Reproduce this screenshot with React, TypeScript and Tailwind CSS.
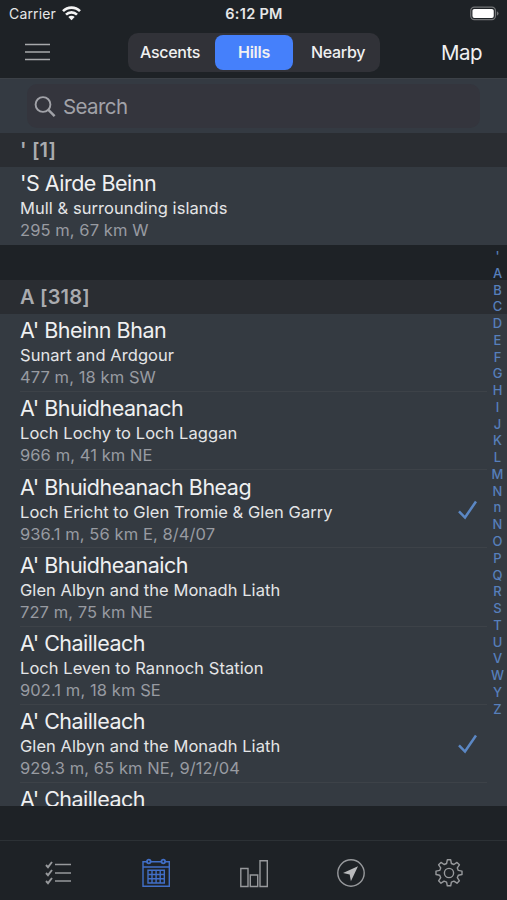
import { clsx } from 'clsx';

type Hill = {
  name: string;
  area: string;
  info: string;
  climbed?: boolean;
};

const hills: Hill[] = [
  { name: "A' Bheinn Bhan", area: 'Sunart and Ardgour', info: '477 m, 18 km SW' },
  { name: "A' Bhuidheanach", area: 'Loch Lochy to Loch Laggan', info: '966 m, 41 km NE' },
  { name: "A' Bhuidheanach Bheag", area: 'Loch Ericht to Glen Tromie & Glen Garry', info: '936.1 m, 56 km E, 8/4/07', climbed: true },
  { name: "A' Bhuidheanaich", area: 'Glen Albyn and the Monadh Liath', info: '727 m, 75 km NE' },
  { name: "A' Chailleach", area: 'Loch Leven to Rannoch Station', info: '902.1 m, 18 km SE' },
  { name: "A' Chailleach", area: 'Glen Albyn and the Monadh Liath', info: '929.3 m, 65 km NE, 9/12/04', climbed: true },
  { name: "A' Chailleach", area: '', info: '' },
];

const letters = "'ABCDEFGHIJKLMNnNOPQRSTUVWYZ".split('');

const StatusBar = () => (
  <div className="grid h-[27px] grid-cols-3 items-center pl-[9px] pr-[8px] text-[14px] text-[#e6e7e8]">
    <div className="flex items-center gap-[6px]">
      <span className="tracking-[0.15px]">Carrier</span>
      <svg width="19" height="15" viewBox="0 0 19 15" fill="none" stroke="#f4f4f4" strokeWidth="2.6">
        <path d="M1 5.2a12 12 0 0 1 17 0" />
        <path d="M4 8.6a7.8 7.8 0 0 1 11 0" />
        <path d="M9.5 14.3 6.3 11a4.5 4.5 0 0 1 6.4 0z" fill="#f4f4f4" stroke="none" />
      </svg>
    </div>
    <span className="text-center text-[14.5px] font-semibold tracking-[0.3px]">6:12 PM</span>
    <svg className="justify-self-end" width="29" height="15" viewBox="0 0 31 15">
      <rect x="0.8" y="0.8" width="26.4" height="13.2" rx="3.8" fill="none" stroke="#737577" strokeWidth="1.3" />
      <rect x="2.6" y="2.6" width="22.8" height="9.6" rx="2" fill="#fff" />
      <path d="M28.7 5v5q1.8-.9 1.8-2.5T28.7 5" fill="#737577" />
    </svg>
  </div>
);

const NavBar = () => (
  <div className="flex h-[51px] items-center px-[25px] text-[#f0f0f1]">
    <button>
      <svg width="25" height="19" viewBox="0 0 25 19" fill="none" stroke="#a7a9ab" strokeWidth="1.6">
        <path d="M0 1.500h25M0 9h25M0 16.500h25" />
      </svg>
    </button>
    <div className="ml-[78px] flex h-[39px] w-[252px] items-center rounded-[10px] bg-[#313238] p-[2px] text-[16px] font-medium tracking-[-0.3px]">
      <span className="w-[85px] pb-px pr-[5px] text-center">Ascents</span>
      <span className="flex h-[35px] w-[78px] items-center justify-center rounded-[8px] bg-[#4580fb] pb-px font-semibold">Hills</span>
      <span className="flex-1 pb-px pl-[5px] text-center">Nearby</span>
    </div>
    <span className="ml-auto pt-px text-[20.5px] tracking-[-0.5px]">Map</span>
  </div>
);

const SearchBar = () => (
  <div className="h-[55px] border-t border-[#3c4147] bg-[#343a42] px-[27px] pb-[5px] pt-[5px]">
    <div className="flex h-full items-center gap-[7px] rounded-[10px] bg-[#34353d] pl-[7px] pt-[2px] text-[#a1a2a8]">
      <svg width="22" height="22" viewBox="0 0 22 22" fill="none" stroke="currentColor" strokeWidth="1.9">
        <circle cx="9" cy="8.500" r="7.4" />
        <path d="m14.4 13.900 6.200 6.200" strokeWidth="2.5" />
      </svg>
      <span className="text-[20.5px] tracking-[-0.6px]">Search</span>
    </div>
  </div>
);

const SectionHeader = ({ title }: { title: string }) => (
  <div className="flex h-[34px] shrink-0 items-center bg-[#2a2d32] pl-5 text-[20px] font-semibold tracking-[0.2px] text-[#a9abaf]">
    {title}
  </div>
);

const HillRow = ({ hill, last }: { hill: Hill; last?: boolean }) => (
  <div className="flex h-[78.15px] shrink-0 bg-[#343a41] pl-5">
    <div className={clsx('mr-5 flex flex-1 items-center justify-between border-b', last ? 'border-transparent' : 'border-[#3d4248]')}>
      <div className="h-full whitespace-nowrap pt-[3.3px]">
        <p className="h-[26px] text-[21.5px] leading-[26px] tracking-[-0.5px] text-[#eff0f1]">{hill.name}</p>
        <p className="h-[23px] text-[16.5px] leading-[24px] tracking-[0.06px] text-[#e4e5e7]">{hill.area}</p>
        <p className="h-[22px] text-[16.5px] leading-[22px] tracking-[0.08px] text-[#989ba1]">{hill.info}</p>
      </div>
      {hill.climbed && (
        <svg className="mr-[10px] mt-[2px]" width="19" height="20" viewBox="0 0 19 20" fill="none" stroke="#5b87c4" strokeWidth="2.5">
          <path d="M1 11.3 7 17.5 18 1.5" />
        </svg>
      )}
    </div>
  </div>
);

const TabBar = () => (
  <div className="flex h-[60px] items-center justify-between border-t border-[#2c3135] bg-[#1e2226] pl-[45px] pr-[43px] pt-[4px] text-[#97999c]">
    <svg width="28" height="28" viewBox="0 0 28 28" fill="none" stroke="currentColor" strokeWidth="1.5">
      <path d="M10 5.500h16M10 14h16M10 22h16" />
      <path d="m1 6 2 2.2L7 3M1 14l2 2.2L7 11M1 22l2 2.2L7 19" strokeWidth="1.9" />
    </svg>
    <svg width="30" height="30" viewBox="0 0 30 30" fill="none" stroke="#416fc7" strokeWidth="1.4">
      <path d="M6 3.700H2v24.500h26.300V3.700h-4M9.500 3.700h11M2 9h26.300" />
      <circle cx="7.8" cy="3.5" r="1.800" strokeWidth="1.800" />
      <circle cx="22.300" cy="3.500" r="1.800" strokeWidth="1.800" />
      <path d="M7 12.3h16.3V25H7zM11 12.3V25M15.1 12.3V25M19.2 12.3V25M7 16.5h16.3M7 20.7h16.3" />
    </svg>
    <svg width="30" height="30" viewBox="0 0 30 30" fill="none" stroke="currentColor" strokeWidth="1.4">
      <path d="M1.800 10.500h7.200v18H1.800zM11.300 17h7.400v11.500h-7.400zM21 2.700h7.300v25.800H21z" />
    </svg>
    <svg width="30" height="30" viewBox="0 0 30 30" fill="none" stroke="currentColor" strokeWidth="1.4">
      <circle cx="15" cy="15" r="13.2" />
      <path d="M22 8.300 7 15l6.700 1.500 1.200 6.700z" fill="#b9babc" stroke="none" />
    </svg>
    <svg width="30" height="30" viewBox="0 0 30 30" fill="none" stroke="currentColor" strokeWidth="1.4" strokeLinejoin="round">
      <circle cx="15" cy="15" r="4.6" />
      <path d="M13.300 1.800h3.400l.7 3.700 2.500 1 3.100-2.100 2.400 2.400-2.100 3.100 1 2.500 3.700.7v3.400l-3.700.7-1 2.500 2.100 3.100-2.400 2.400-3.100-2.100-2.500 1-.7 3.700h-3.400l-.7-3.700-2.500-1L7 25.200l-2.400-2.400 2.100-3.100-1-2.500L2 16.500v-3.400l3.700-.7 1-2.500-2.100-3.100L7 4.400l3.100 2.100 2.500-1z" />
    </svg>
  </div>
);

const App = () => {
  return (
    <div className="relative flex h-[900px] w-[507px] flex-col overflow-hidden bg-[#1e2226] font-['Inter',sans-serif]">
      <StatusBar />
      <NavBar />
      <SearchBar />

      <div className="flex h-[673px] flex-col overflow-hidden">
        <SectionHeader title="' [1]" />
        <HillRow hill={{ name: "'S Airde Beinn", area: 'Mull & surrounding islands', info: '295 m, 67 km W' }} last />
        <div className="h-[34.85px] shrink-0" />
        <SectionHeader title="A [318]" />
        {hills.map((hill, i) => (
          <HillRow key={i} hill={hill} />
        ))}
      </div>

      <div className="flex-1" />
      <TabBar />

      {/* Alphabet index floating over the list */}
      <div className="absolute right-0 top-[248px] flex w-[19px] flex-col text-center text-[13px] font-medium text-[#577fbb]">
        {letters.map((letter, i) => (
          <span key={i} className="h-[16.77px] leading-[17px]">
            {letter}
          </span>
        ))}
      </div>
    </div>
  );
};

export default App;
